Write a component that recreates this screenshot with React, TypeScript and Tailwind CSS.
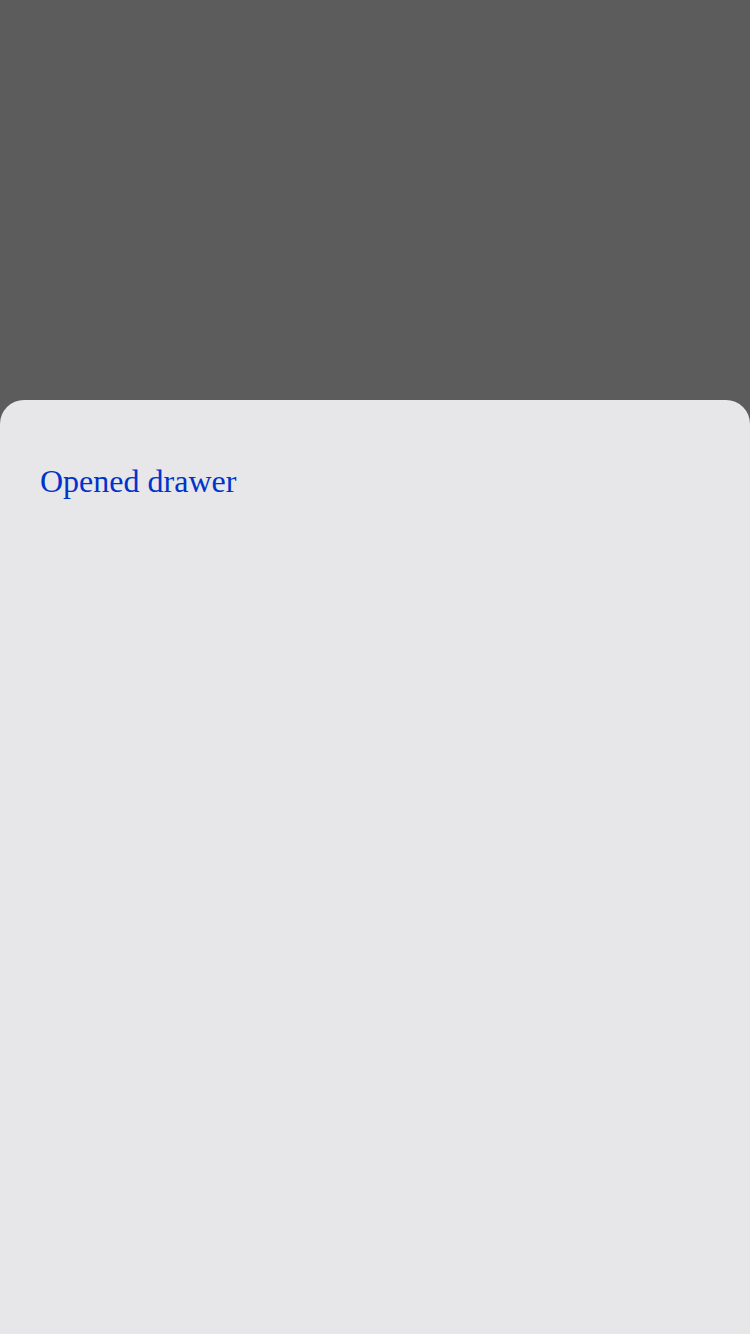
export default function App() {
  return (
    <div className="h-[1334px] w-[750px] bg-[#5c5c5c] flex flex-col overflow-hidden">
      <div className="h-[400px] shrink-0" />
      <div className="flex-1 bg-[#e7e7e9] rounded-t-[24px] px-10 pt-[57px]">
        <p className="text-[32px] leading-normal text-[#0033cc] font-['Liberation_Serif',serif]">
          Opened drawer
        </p>
      </div>
    </div>
  );
}
